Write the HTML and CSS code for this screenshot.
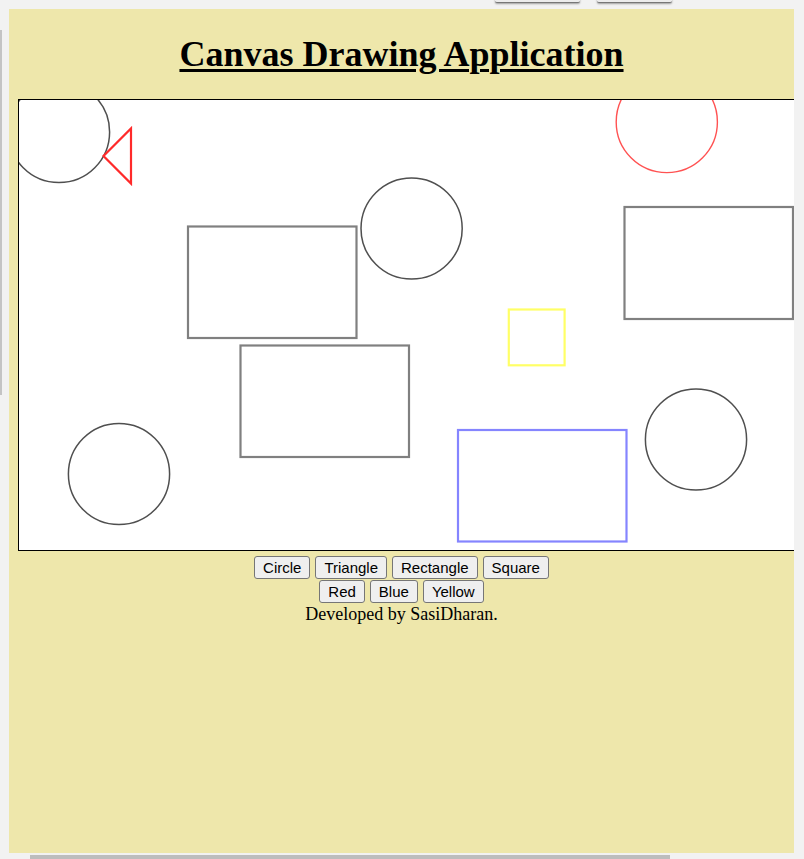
FILE: index.html
```html
<!DOCTYPE html>
<html>
<head>
<meta charset="utf-8">
<title>Canvas Drawing Application</title>
<link rel="stylesheet" href="styles.css">
</head>
<body>
<div class="topbar">
  <span class="tab tab-a"></span>
  <span class="tab tab-b"></span>
</div>
<div class="side-rail"></div>
<div class="frame">
  <h1 class="title">Canvas Drawing Application</h1>
  <div class="board">
    <svg class="shapes" width="900" height="450" viewBox="0 0 900 450">
      <g transform="translate(-19,-100)">
        <circle cx="59" cy="132" r="50.6" fill="none" stroke="#4f4f4f" stroke-width="1.5"/>
        <polygon points="103.5,156 131,128.5 131,183.5" fill="none" stroke="#ff2a2a" stroke-width="2.2" stroke-linejoin="miter"/>
        <circle cx="666.8" cy="122" r="50.6" fill="none" stroke="#ff5252" stroke-width="1.4"/>
        <circle cx="411.6" cy="228.5" r="50.6" fill="none" stroke="#4f4f4f" stroke-width="1.5"/>
        <circle cx="696" cy="439.5" r="50.6" fill="none" stroke="#4f4f4f" stroke-width="1.5"/>
        <circle cx="119" cy="474" r="50.6" fill="none" stroke="#4f4f4f" stroke-width="1.5"/>
        <rect x="188" y="226.5" width="168.5" height="111.5" fill="none" stroke="#808080" stroke-width="2.2"/>
        <rect x="240.5" y="345.5" width="168.5" height="111.5" fill="none" stroke="#808080" stroke-width="2.2"/>
        <rect x="624.5" y="207" width="168.5" height="112" fill="none" stroke="#808080" stroke-width="2.2"/>
        <rect x="508.8" y="309.5" width="55.8" height="55.8" fill="none" stroke="#ffff66" stroke-width="2.2"/>
        <rect x="458" y="430" width="168.5" height="111.5" fill="none" stroke="#8585ff" stroke-width="2.2"/>
      </g>
    </svg>
  </div>
  <div class="btn-row">
    <button class="btn">Circle</button>
    <button class="btn">Triangle</button>
    <button class="btn">Rectangle</button>
    <button class="btn">Square</button>
  </div>
  <div class="btn-row">
    <button class="btn">Red</button>
    <button class="btn">Blue</button>
    <button class="btn">Yellow</button>
  </div>
  <p class="credit">Developed by SasiDharan.</p>
</div>
<div class="hscroll"></div>
</body>
</html>
```

FILE: styles.css
```css
html, body {
  margin: 0;
  padding: 0;
  height: 100%;
  overflow: hidden;
}

body {
  background: #f2f2f2;
  position: relative;
  font-family: "Liberation Serif", "Times New Roman", serif;
}

.topbar {
  position: absolute;
  top: 0;
  left: 0;
  width: 100%;
  height: 2px;
}

.tab {
  position: absolute;
  top: -3px;
  height: 5px;
  background: #ececec;
  border-bottom: 1px solid #777;
  box-shadow: 0 1px 2px rgba(0,0,0,0.35);
  border-radius: 0 0 2px 2px;
}

.tab-a { left: 495px; width: 85px; }
.tab-b { left: 597px; width: 75px; }

.side-rail {
  position: absolute;
  left: 0;
  top: 30px;
  width: 2px;
  height: 365px;
  background: #c4c4c4;
}

.frame {
  position: absolute;
  left: 9px;
  top: 9px;
  width: 785px;
  height: 844px;
  background: #eee7ab;
  overflow: hidden;
  box-sizing: border-box;
  padding: 0 9px;
  display: flex;
  flex-direction: column;
  align-items: flex-start;
}

.title {
  align-self: stretch;
  margin: 24px 0;
  font-size: 36px;
  line-height: 42px;
  font-weight: bold;
  text-align: center;
  text-decoration: underline;
  text-decoration-thickness: 3px;
  text-underline-offset: 3px;
  color: #000;
}

.board {
  flex: none;
  width: 900px;
  height: 450px;
  border: 1px solid #000;
  background: #fff;
}

.shapes {
  display: block;
}

.btn-row {
  align-self: stretch;
  display: flex;
  justify-content: center;
  gap: 5px;
  height: 23px;
  margin-top: 1px;
}

.board + .btn-row {
  margin-top: 5px;
}

.btn {
  height: 23px;
  margin: 0;
  padding: 0 8px;
  font-family: "Liberation Sans", Arial, sans-serif;
  font-size: 15px;
  line-height: 21px;
  color: #000;
  background: #efefef;
  border: 1px solid #767676;
  border-radius: 3px;
}

.credit {
  align-self: stretch;
  margin: 1px 0 0;
  font-size: 18px;
  line-height: 21px;
  text-align: center;
  color: #000;
}

.hscroll {
  position: absolute;
  left: 30px;
  top: 855px;
  width: 640px;
  height: 4px;
  background: #bdbdbd;
}
```
